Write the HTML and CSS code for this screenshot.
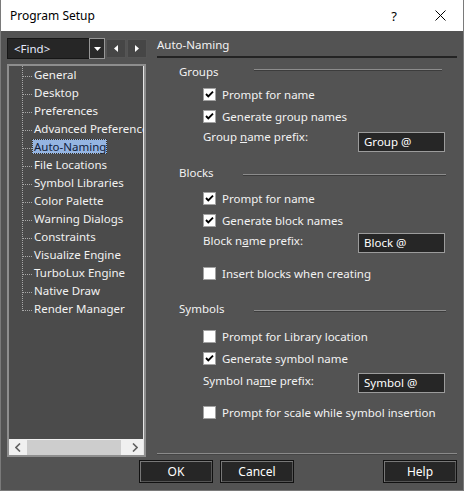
FILE: index.html
```html
<!DOCTYPE html>
<html lang="en">
<head>
  <meta charset="UTF-8">
  <title>Program Setup</title>
  <link rel="stylesheet" href="styles.css">
</head>
<body>
  <div class="window">
    <div class="titlebar">
      <span class="title">Program Setup</span>
      <span class="title-btn title-help">?</span>
      <span class="title-btn">
        <svg width="11" height="11" viewBox="0 0 11 11"><path d="M0.5 0.5 L10.5 10.5 M10.5 0.5 L0.5 10.5" stroke="#000" stroke-width="1" fill="none"/></svg>
      </span>
    </div>

    <div class="main">
      <div class="sidebar">
        <div class="find-row">
          <div class="combo">
            <span class="combo-text">&lt;Find&gt;</span>
            <span class="combo-drop">
              <svg width="7" height="4" viewBox="0 0 7 4"><path d="M0 0 H7 L3.5 4 Z" fill="#fff"/></svg>
            </span>
          </div>
          <span class="nav-btn">
            <svg width="4" height="7" viewBox="0 0 4 7"><path d="M4 0 V7 L0 3.5 Z" fill="#fff"/></svg>
          </span>
          <span class="nav-btn">
            <svg width="4" height="7" viewBox="0 0 4 7"><path d="M0 0 V7 L4 3.5 Z" fill="#fff"/></svg>
          </span>
        </div>

        <div class="tree">
          <ul class="tree-list">
            <li class="tree-item"><span>General</span></li>
            <li class="tree-item"><span>Desktop</span></li>
            <li class="tree-item"><span>Preferences</span></li>
            <li class="tree-item"><span>Advanced Preferences</span></li>
            <li class="tree-item selected"><span>Auto-Naming</span></li>
            <li class="tree-item"><span>File Locations</span></li>
            <li class="tree-item"><span>Symbol Libraries</span></li>
            <li class="tree-item"><span>Color Palette</span></li>
            <li class="tree-item"><span>Warning Dialogs</span></li>
            <li class="tree-item"><span>Constraints</span></li>
            <li class="tree-item"><span>Visualize Engine</span></li>
            <li class="tree-item"><span>TurboLux Engine</span></li>
            <li class="tree-item"><span>Native Draw</span></li>
            <li class="tree-item last"><span>Render Manager</span></li>
          </ul>
          <div class="hscroll">
            <span class="scroll-btn">
              <svg width="6" height="9" viewBox="0 0 6 9"><path d="M5 0.5 L1 4.5 L5 8.5" stroke="#606060" stroke-width="1.6" fill="none"/></svg>
            </span>
            <span class="scroll-track"><span class="scroll-thumb"></span></span>
            <span class="scroll-btn">
              <svg width="6" height="9" viewBox="0 0 6 9"><path d="M1 0.5 L5 4.5 L1 8.5" stroke="#606060" stroke-width="1.6" fill="none"/></svg>
            </span>
          </div>
        </div>
      </div>

      <div class="page">
        <div class="page-head">Auto-Naming</div>

        <!-- Groups -->
        <div class="sec-title groups"><span class="sec-name">Groups</span><i class="rule"></i></div>
        <div class="check-row first-g">
          <span class="check on"></span><span>Prompt for name</span>
        </div>
        <div class="check-row">
          <span class="check on"></span><span>Generate group names</span>
        </div>
        <div class="prefix-row prefix-g">
          <span class="prefix-label">Group <u>n</u>ame prefix:</span>
          <span class="text-field">Group @</span>
        </div>

        <!-- Blocks -->
        <div class="sec-title blocks"><span class="sec-name">Blocks</span><i class="rule"></i></div>
        <div class="check-row first-b">
          <span class="check on"></span><span>Prompt for name</span>
        </div>
        <div class="check-row">
          <span class="check on"></span><span>Generate block names</span>
        </div>
        <div class="prefix-row prefix-b">
          <span class="prefix-label">Block n<u>a</u>me prefix:</span>
          <span class="text-field">Block @</span>
        </div>
        <div class="check-row insert-b">
          <span class="check"></span><span>Insert blocks when creating</span>
        </div>

        <!-- Symbols -->
        <div class="sec-title symbols"><span class="sec-name">Symbols</span><i class="rule"></i></div>
        <div class="check-row first-s">
          <span class="check"></span><span>Prompt for Library location</span>
        </div>
        <div class="check-row">
          <span class="check on"></span><span>Generate symbol name</span>
        </div>
        <div class="prefix-row prefix-s">
          <span class="prefix-label">Symbol na<u>m</u>e prefix:</span>
          <span class="text-field">Symbol @</span>
        </div>
        <div class="check-row scale-s">
          <span class="check"></span><span>Prompt for scale while symbol insertion</span>
        </div>

        <div class="foot-rule"></div>
      </div>
    </div>

    <div class="footer">
      <button class="btn">OK</button>
      <button class="btn">Cancel</button>
      <button class="btn help">Help</button>
    </div>
  </div>
</body>
</html>
```

FILE: styles.css
```css
* {
  margin: 0;
  padding: 0;
  box-sizing: border-box;
}

body {
  width: 464px;
  height: 491px;
  font-family: "Noto Sans", "DejaVu Sans", sans-serif;
  font-size: 11.5px;
  color: #f2f2f2;
  overflow: hidden;
}

.window {
  display: flex;
  flex-direction: column;
  width: 464px;
  height: 491px;
  background: #535353;
  border: 1px solid #7a7a7a;
  border-top: none;
}

/* title bar */
.titlebar {
  display: flex;
  align-items: center;
  height: 31px;
  background: #fff;
  color: #000;
  font-size: 12px;
}

.title {
  flex: 1;
  padding-left: 9px;
  line-height: 31px;
}

.title-btn {
  display: flex;
  justify-content: center;
  align-items: center;
  width: 46px;
  height: 31px;
}

.title-help {
  font-size: 13px;
}

/* main area */
.main {
  display: flex;
  height: 427px;
}

.sidebar {
  width: 140px;
  margin-left: 6px;
  padding-top: 7px;
}

.find-row {
  display: flex;
  align-items: flex-start;
  height: 21px;
}

.combo {
  display: flex;
  width: 98px;
  height: 21px;
  background: #262626;
  border: 1px solid #161616;
  box-shadow: 0 0 0 0 transparent;
}

.combo-text {
  flex: 1;
  padding-left: 6px;
  line-height: 19px;
  color: #e6ecff;
}

.combo-drop {
  display: flex;
  justify-content: center;
  align-items: center;
  width: 16px;
  margin: -1px -1px -1px 0;
  background: #2a2a2a;
  border: 1px solid #979797;
}

.nav-btn {
  display: flex;
  justify-content: center;
  align-items: center;
  width: 20px;
  height: 19px;
  margin-top: 1px;
  margin-left: 1px;
  background: #464646;
  border: 1px solid #555;
}

.nav-btn + .nav-btn {
  margin-left: 1px;
}

.tree {
  display: flex;
  flex-direction: column;
  width: 139px;
  height: 393px;
  margin-top: 5px;
  background: #4b4b4b;
  border: 2px solid #8e8e8e;
  box-shadow: inset -1px 0 0 #e6e6e6;
  overflow: hidden;
}

.tree-list {
  flex: 1;
  list-style: none;
  white-space: nowrap;
  overflow: hidden;
}

.tree-item {
  height: 18px;
  line-height: 18px;
  padding-left: 25px;
  color: #f2f2f2;
  background:
    repeating-linear-gradient(to bottom, #a8a8a8 0 1px, transparent 1px 2px) 13px 0 / 1px 100% no-repeat,
    repeating-linear-gradient(to right, #a8a8a8 0 1px, transparent 1px 2px) 14px 10px / 9px 1px no-repeat;
}

.tree-item.last {
  background:
    repeating-linear-gradient(to bottom, #a8a8a8 0 1px, transparent 1px 2px) 13px 0 / 1px 11px no-repeat,
    repeating-linear-gradient(to right, #a8a8a8 0 1px, transparent 1px 2px) 14px 10px / 9px 1px no-repeat;
}

.tree-item.selected span {
  display: inline-block;
  margin-left: -2px;
  padding: 0 1px 0 2px;
  line-height: 15px;
  background: #95b5e2;
  color: #10203a;
  outline: 1px dotted #3a3020;
  outline-offset: -1px;
}

.hscroll {
  display: flex;
  height: 16px;
  background: #f0f0f0;
  margin-right: 1px;
}

.scroll-btn {
  display: flex;
  justify-content: center;
  align-items: center;
  width: 17px;
}

.scroll-track {
  flex: 1;
  padding: 1px 0 0 1px;
}

.scroll-thumb {
  display: block;
  width: 94px;
  height: 15px;
  background: #cdcdcd;
}

/* settings page */
.page {
  display: flex;
  flex-direction: column;
  width: 300px;
  margin-left: 10px;
}

.page-head {
  margin-top: 6px;
  padding-bottom: 3px;
  line-height: 16px;
  border-bottom: 2px solid #232323;
}

.sec-title {
  display: flex;
  align-items: flex-start;
  padding-left: 22px;
  line-height: 16px;
}

.sec-name {
  width: 75px;
}

.rule {
  flex: 1;
  height: 2px;
  margin-top: 9px;
  margin-right: 11px;
  border-top: 1px solid #8c8c8c;
  border-bottom: 1px solid #3c3c3c;
}

.groups { margin-top: 6px; }
.groups .rule { margin-top: 5px; margin-right: 15px; }
.blocks { margin-top: 13px; }
.blocks .sec-name { width: 64px; }
.symbols { margin-top: 17px; }

.check-row {
  display: flex;
  align-items: center;
  gap: 6px;
  height: 22px;
  padding-left: 46px;
}

.check {
  position: relative;
  flex: none;
  width: 13px;
  height: 13px;
  background: #fff;
  border: 1px solid #a2a2a2;
}

.check.on {
  background: #fff url("data:image/svg+xml,%3Csvg xmlns='http://www.w3.org/2000/svg' width='11' height='11' viewBox='0 0 11 11'%3E%3Cpath d='M2 5 L4.3 7.4 L9 2.6' stroke='%23000' stroke-width='1.9' fill='none'/%3E%3C/svg%3E") center / 11px 11px no-repeat;
}

.first-g { margin-top: 3px; }
.first-b { margin-top: 6px; }
.first-s { margin-top: 8px; }
.insert-b { margin-top: 9px; }
.scale-s { margin-top: 8px; }

.prefix-row {
  display: flex;
  align-items: flex-start;
  padding-left: 46px;
  padding-right: 12px;
}

.prefix-label {
  flex: 1;
  line-height: 16px;
}

.prefix-g { margin-top: 5px; }
.prefix-g .prefix-label { margin-top: -3px; }
.prefix-b { margin-top: 2px; }
.prefix-s { margin-top: 4px; }

.text-field {
  width: 87px;
  height: 20px;
  padding-left: 5px;
  line-height: 18px;
  background: #262626;
  border: 1px solid #9c9c9c;
  color: #fff;
}

.foot-rule {
  margin-top: auto;
  margin-bottom: 3px;
  height: 2px;
  border-top: 1px solid #8a8a8a;
  border-bottom: 1px solid #454545;
}

/* buttons */
.footer {
  display: flex;
  gap: 7px;
  padding: 2px 6px 0 138px;
}

.btn {
  width: 74px;
  height: 23px;
  font-family: inherit;
  font-size: 12px;
  color: #fff;
  background: #262626;
  border: 1px solid #111;
  box-shadow: inset 1px 1px 0 #777, inset -1px -1px 0 #555;
}

.btn.help {
  margin-left: auto;
}
```
